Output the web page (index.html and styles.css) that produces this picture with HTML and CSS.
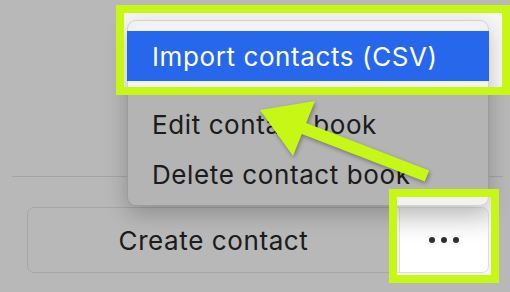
FILE: index.html
```html
<!DOCTYPE html>
<html lang="en">
<head>
<meta charset="utf-8">
<title>Contact book menu</title>
<link rel="stylesheet" href="styles.css">
</head>
<body>
<div class="page">
  <div class="list"></div>
  <div class="divider"></div>
  <div class="actions">
    <button class="btn btn-create">Create contact</button>
    <button class="btn btn-more" aria-label="More"><span class="dot"></span><span class="dot"></span><span class="dot"></span></button>
  </div>

  <div class="menu">
    <div class="menu-item active">Import contacts (CSV)</div>
    <div class="menu-sep"></div>
    <div class="menu-item">Edit contact book</div>
    <div class="menu-item">Delete contact book</div>
  </div>

  <svg class="dim" width="510" height="292" viewBox="0 0 510 292">
    <path fill-rule="evenodd" d="M0 0H510V292H0Z M116 5H510V95H116Z M389 189H499V283H389Z"/>
  </svg>
  <div class="spot spot-menu"></div>
  <div class="spot spot-more"></div>
  <svg class="arrow" width="510" height="292" viewBox="0 0 510 292">
    <polygon points="260,110 315,101 306.2,122.9 429.2,170.4 424.8,181.6 301.8,134.1 293,156"/>
  </svg>
</div>
</body>
</html>
```

FILE: styles.css
```css
* { box-sizing: border-box; }
html, body { margin: 0; padding: 0; }
body {
  background: #f7f7f7;
  font-family: Inter, "Noto Sans", "DejaVu Sans", sans-serif;
  color: #262626;
  overflow: hidden;
}
.page {
  position: relative;
  width: 510px;
  height: 292px;
}
.list { height: 176px; }
.divider {
  height: 1px;
  background: #dcdcdc;
  margin: 0 7px 0 12px;
}
.actions {
  display: flex;
  margin: 30px 21px 0 27px;
  height: 66px;
}
.btn {
  font-family: inherit;
  font-size: 26px;
  letter-spacing: 0.6px;
  color: #262626;
  border: 1px solid #dedede;
  background: transparent;
  padding: 0;
  margin: 0;
  display: flex;
  align-items: center;
  justify-content: center;
}
.btn-create {
  flex: 1;
  border-radius: 7px 0 0 7px;
}
.btn-more {
  width: 90px;
  margin-left: -1px;
  border-radius: 0 7px 7px 0;
  background: linear-gradient(#ececec, #ffffff 55%);
  gap: 6px;
}
.dot {
  width: 6px;
  height: 6px;
  border-radius: 50%;
  background: #2e2e2e;
}
.menu {
  position: absolute;
  left: 127px;
  top: 20px;
  width: 362px;
  height: 186px;
  padding-top: 10px;
  background: #f2f2f2;
  border: 1px solid #d2d2d2;
  border-radius: 9px;
  box-shadow: 0 8px 22px rgba(0, 0, 0, 0.22);
  font-size: 26px;
  letter-spacing: 0.6px;
}
.menu-item {
  height: 50px;
  padding-left: 24px;
  display: flex;
  align-items: center;
  color: #262626;
  white-space: nowrap;
}
.menu-item.active {
  background: #2767ec;
  color: #ffffff;
  margin: 0 -1px;
  padding-left: 25px;
}
.menu-sep { height: 18px; }
.dim {
  position: absolute;
  left: 0;
  top: 0;
  fill: rgba(0, 0, 0, 0.255);
}
.spot {
  position: absolute;
  border: 8px solid #c6f715;
}
.spot-menu { left: 116px; top: 5px; width: 394px; height: 90px; }
.spot-more { left: 389px; top: 189px; width: 110px; height: 94px; }
.arrow {
  position: absolute;
  left: 0;
  top: 0;
  fill: #c6f715;
  filter: drop-shadow(1px 2px 2px rgba(0, 0, 0, 0.35));
}
```
